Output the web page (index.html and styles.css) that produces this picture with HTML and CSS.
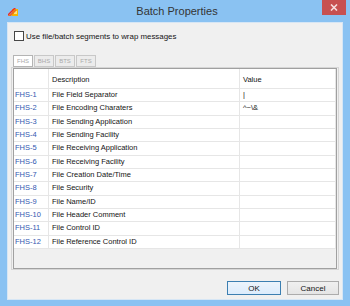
FILE: index.html
```html
<!DOCTYPE html>
<html lang="en">
<head>
<meta charset="utf-8">
<title>Batch Properties</title>
<link rel="stylesheet" href="styles.css">
</head>
<body>

<div class="window">
	<div class="titlebar">
		<svg class="app-icon" width="10" height="8" viewBox="0 0 10 8">
			<rect x="4" y="1" width="6" height="7" fill="#f5b400"/>
			<rect x="6" y="3" width="3" height="3" fill="#ffe27a"/>
			<polygon points="0,8 0,6 6,0 8,0" fill="#e8282a"/>
			<polygon points="0,8 3,8 8,3 8,1" fill="#f06a1d"/>
		</svg>
		<span class="title">Batch Properties</span>
		<div class="close">
			<svg width="8" height="7" viewBox="0 0 8 7">
				<path d="M1 0.5 L7 6.5 M7 0.5 L1 6.5" stroke="#f6dede" stroke-width="1.6"/>
			</svg>
		</div>
	</div>

	<div class="client">
		<label class="wrap-option"><span class="checkbox"></span>Use file/batch segments to wrap messages</label>

		<div class="tabs">
			<span class="tab active">FHS</span>
			<span class="tab">BHS</span>
			<span class="tab">BTS</span>
			<span class="tab">FTS</span>
		</div>

		<div class="tab-page">
			<div class="grid">
				<div class="cell head"></div>
				<div class="cell head">Description</div>
				<div class="cell head">Value</div>

				<div class="cell id">FHS-1</div><div class="cell">File Field Separator</div><div class="cell">|</div>
				<div class="cell id">FHS-2</div><div class="cell">File Encoding Charaters</div><div class="cell">^~\&amp;</div>
				<div class="cell id">FHS-3</div><div class="cell">File Sending Application</div><div class="cell"></div>
				<div class="cell id">FHS-4</div><div class="cell">File Sending Facility</div><div class="cell"></div>
				<div class="cell id">FHS-5</div><div class="cell">File Receiving Application</div><div class="cell"></div>
				<div class="cell id">FHS-6</div><div class="cell">File Receiving Facility</div><div class="cell"></div>
				<div class="cell id">FHS-7</div><div class="cell">File Creation Date/Time</div><div class="cell"></div>
				<div class="cell id">FHS-8</div><div class="cell">File Security</div><div class="cell"></div>
				<div class="cell id">FHS-9</div><div class="cell">File Name/ID</div><div class="cell"></div>
				<div class="cell id">FHS-10</div><div class="cell">File Header Comment</div><div class="cell"></div>
				<div class="cell id">FHS-11</div><div class="cell">File Control ID</div><div class="cell"></div>
				<div class="cell id">FHS-12</div><div class="cell">File Reference Control ID</div><div class="cell"></div>
			</div>
		</div>

		<div class="footer">
			<button class="btn default">OK</button>
			<button class="btn">Cancel</button>
		</div>
	</div>
</div>

</body>
</html>
```

FILE: styles.css
```css
html {
	font-family: 'Liberation Sans', Arial, sans-serif;
}

body {
	margin: 0;
}

.window {
	background-color: rgb(138, 194, 242);
	box-sizing: border-box;
	height: 306px;
	width: 350px;
}

.titlebar {
	display: grid;
	grid-template-columns: 1fr auto 1fr;
	height: 22px;
	padding: 0 4px 0 8px;
}

.app-icon {
	align-self: start;
	margin-top: 8px;
}

.title {
	color: rgb(52, 52, 52);
	font-size: 11px;
	line-height: 13px;
	margin-top: 5px;
}

.close {
	align-items: center;
	align-self: start;
	background-color: rgb(199, 80, 80);
	display: flex;
	height: 15px;
	justify-content: center;
	justify-self: end;
	width: 24px;
}

.client {
	background-color: rgb(240, 240, 240);
	border: 1px solid rgb(214, 230, 245);
	box-sizing: border-box;
	height: 278px;
	margin: 0 7px;
}

.wrap-option {
	align-items: center;
	color: rgb(20, 20, 20);
	display: flex;
	font-size: 7.9px;
	height: 10px;
	margin: 8px 0 0 6px;
}

.checkbox {
	background-color: #fff;
	border: 1px solid rgb(70, 70, 70);
	box-sizing: border-box;
	height: 10px;
	margin-right: 2px;
	width: 10px;
}

.tabs {
	display: flex;
	gap: 1px;
	margin: 14px 0 0 5px;
}

.tab {
	background-color: rgb(236, 236, 236);
	border: 1px solid rgb(200, 200, 200);
	box-sizing: border-box;
	color: rgb(170, 170, 170);
	font-size: 6px;
	height: 12px;
	line-height: 10px;
	text-align: center;
	width: 20px;
}

.tab.active {
	background-color: #fff;
	border-color: rgb(180, 180, 180);
}

.tab-page {
	border: 1px solid rgb(214, 214, 214);
	box-sizing: border-box;
	height: 203px;
	margin: 0 3px;
	padding: 0 1px 1px;
}

.grid {
	background-color: rgb(240, 240, 240);
	border: 1px solid rgb(160, 160, 160);
	box-sizing: border-box;
	display: grid;
	grid-template-columns: 35px 191px 1fr;
	grid-template-rows: 20px;
	grid-auto-rows: 13.333px;
	height: 201px;
}

.cell {
	background-color: #fff;
	border-bottom: 1px solid rgb(230, 230, 230);
	border-right: 1px solid rgb(230, 230, 230);
	box-sizing: border-box;
	color: rgb(20, 20, 20);
	font-size: 7.5px;
	line-height: 12px;
	overflow: hidden;
	padding-left: 3px;
	white-space: nowrap;
}

.cell.head {
	line-height: 21px;
}

.cell.id {
	color: rgb(52, 88, 176);
	padding-left: 1px;
}

.footer {
	display: flex;
	gap: 6px;
	justify-content: flex-end;
	margin: 11px 3px 0 0;
}

.btn {
	background: linear-gradient(rgb(240, 240, 240), rgb(229, 229, 229));
	border: 1px solid rgb(172, 172, 172);
	box-sizing: border-box;
	color: rgb(20, 20, 20);
	font-family: inherit;
	font-size: 8px;
	height: 14px;
	padding: 0;
	width: 52px;
}

.btn.default {
	background: linear-gradient(rgb(236, 244, 252), rgb(220, 236, 252));
	border-color: rgb(60, 127, 177);
	width: 54px;
}
```
